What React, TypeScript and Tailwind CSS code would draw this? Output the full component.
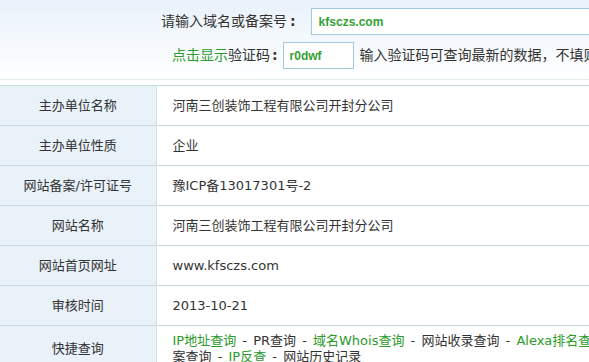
import React from 'react';

const rows: Array<{ label: string; value: string }> = [
  { label: '主办单位名称', value: '河南三创装饰工程有限公司开封分公司' },
  { label: '主办单位性质', value: '企业' },
  { label: '网站备案/许可证号', value: '豫ICP备13017301号-2' },
  { label: '网站名称', value: '河南三创装饰工程有限公司开封分公司' },
  { label: '网站首页网址', value: 'www.kfsczs.com' },
  { label: '审核时间', value: '2013-10-21' },
];

const font = { fontFamily: '"DejaVu Sans", "Noto Sans CJK SC", sans-serif' };
const inputFont = { fontFamily: '"Liberation Sans", Arial, sans-serif' };

function Sep() {
  return <span className="mx-[2px] text-[#333]"> - </span>;
}

function Link({ children }: { children: React.ReactNode }) {
  return <a className="text-[#2a9a2a]">{children}</a>;
}

export default function App() {
  return (
    <div className="w-[589px] h-[362px] overflow-hidden bg-white text-[13px] text-[#333]" style={font}>
      <div className="w-[780px]">
        {/* query form */}
        <div className="h-[79px] bg-gradient-to-b from-[#e9f2fa] to-white pt-[8px] text-[14px]">
          <div className="flex items-center h-[27px]">
            <span className="ml-[161px] shrink-0 whitespace-nowrap">请输入域名或备案号</span>
            <span className="ml-[3px] shrink-0 font-bold">:</span>
            <input
              readOnly
              value="kfsczs.com"
              className="ml-[15px] w-[279px] shrink-0 h-[27px] border border-[#a3cadc] bg-white px-[7px] text-[12px] font-bold text-[#33a033] outline-none"
              style={inputFont}
            />
          </div>
          <div className="flex items-center h-[27px] mt-[7px]">
            <span className="ml-[172px] shrink-0 whitespace-nowrap">
              <span className="text-[#2a9a2a]">点击显示</span>验证码
            </span>
            <span className="ml-[2px] shrink-0 font-bold">:</span>
            <input
              readOnly
              value="r0dwf"
              className="ml-[5px] w-[71px] shrink-0 h-[27px] border border-[#a3cadc] bg-white px-[6px] text-[12px] font-bold text-[#33a033] outline-none"
              style={inputFont}
            />
            <span className="ml-[6px] shrink-0 whitespace-nowrap">输入验证码可查询最新的数据，不填则显示缓存数据</span>
          </div>
        </div>
        <div className="h-[6px] border-t border-[#e2edf1]" />

        {/* record table */}
        <table className="w-full border-collapse border-t border-[#c6dce2]">
          <tbody>
            {rows.map((row) => (
              <tr key={row.label} className="h-[40px] border-b border-[#c6dce2]">
                <td className="w-[156px] bg-[#e9f1f9] border-r border-[#d3e2ea] text-center">{row.label}</td>
                <td className="pl-[16px]">{row.value}</td>
              </tr>
            ))}
            <tr className="h-[46px] border-b border-[#c6dce2]">
              <td className="w-[156px] bg-[#e9f1f9] border-r border-[#d3e2ea] text-center">快捷查询</td>
              <td className="pl-[16px] py-[7px] leading-[16px] whitespace-nowrap">
                <div>
                  <Link>IP地址查询</Link>
                  <Sep />
                  <span>PR查询</span>
                  <Sep />
                  <Link>域名Whois查询</Link>
                  <Sep />
                  <span>网站收录查询</span>
                  <Sep />
                  <Link>Alexa排名查询</Link>
                  <Sep />
                  <span>备</span>
                </div>
                <div>
                  <span>案查询</span>
                  <Sep />
                  <Link>IP反查</Link>
                  <Sep />
                  <span>网站历史记录</span>
                </div>
              </td>
            </tr>
          </tbody>
        </table>
      </div>
    </div>
  );
}
